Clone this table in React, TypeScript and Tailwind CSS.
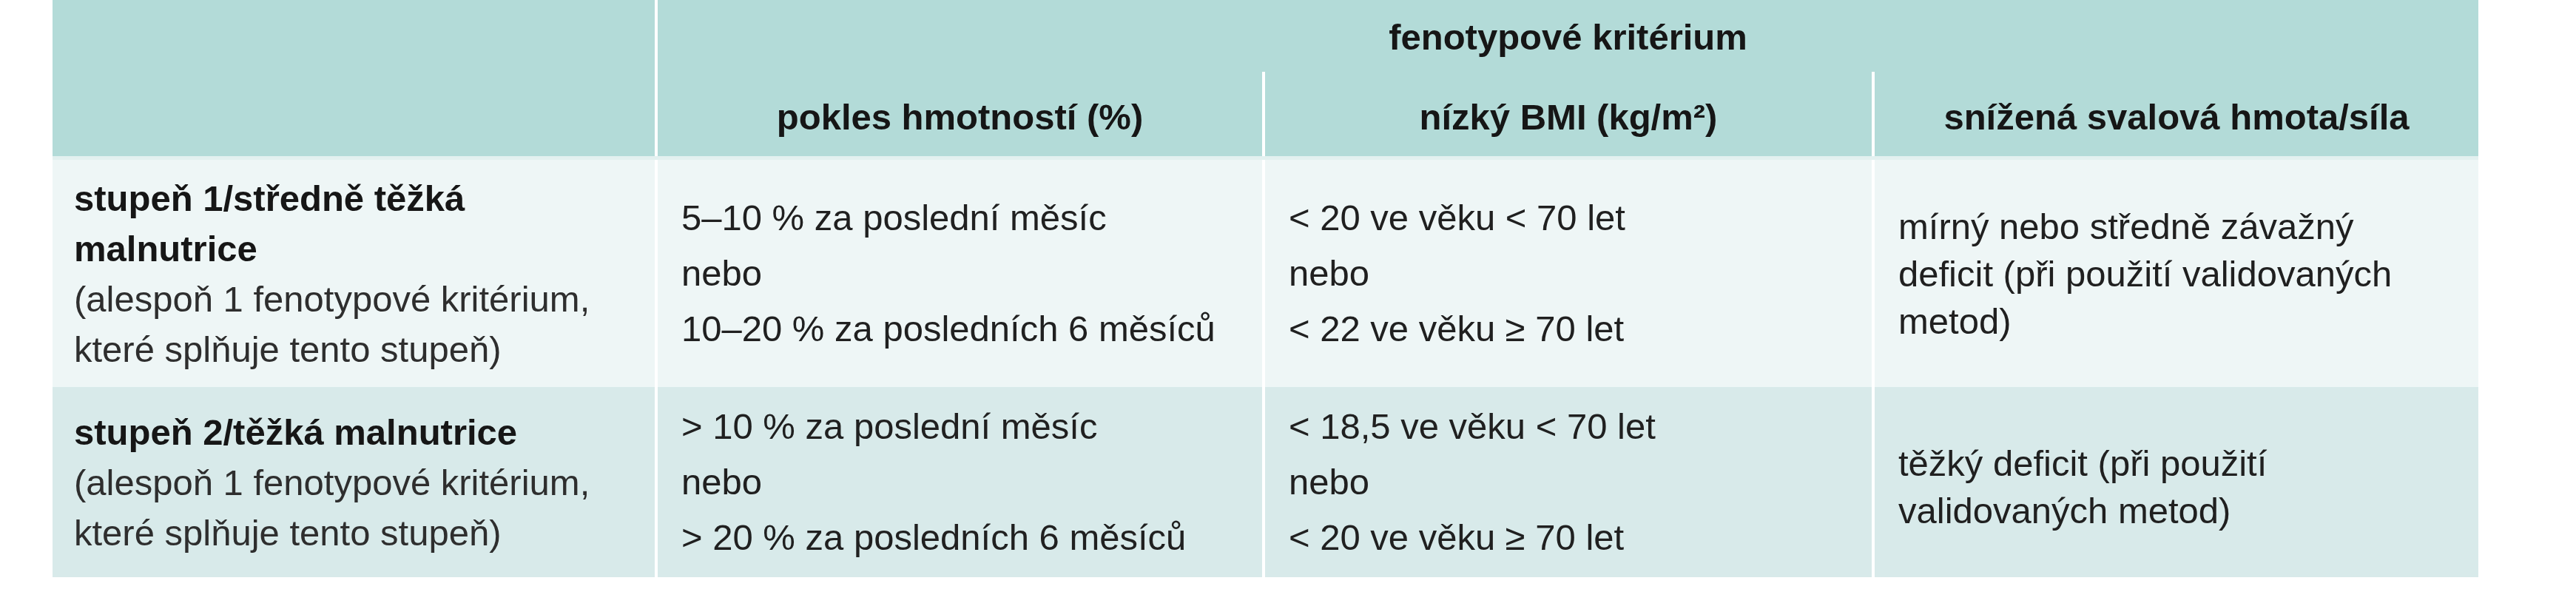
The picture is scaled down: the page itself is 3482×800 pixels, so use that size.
const cols = "grid grid-cols-[814px_821px_824px_820px]"

const rows = [
  {
    bg: "bg-[#eef6f6]",
    height: "h-[307px]",
    title: ["stupeň 1/středně těžká", "malnutrice"],
    weight: ["5–10 % za poslední měsíc", "nebo", "10–20 % za posledních 6 měsíců"],
    bmi: ["< 20 ve věku < 70 let", "nebo", "< 22 ve věku ≥ 70 let"],
    muscle: ["mírný nebo středně závažný", "deficit (při použití validovaných", "metod)"],
    musclePad: "pt-0",
  },
  {
    bg: "bg-[#d8eaea]",
    height: "h-[257px]",
    title: ["stupeň 2/těžká malnutrice"],
    weight: ["> 10 % za poslední měsíc", "nebo", "> 20 % za posledních 6 měsíců"],
    bmi: ["< 18,5 ve věku < 70 let", "nebo", "< 20 ve věku ≥ 70 let"],
    muscle: ["těžký deficit (při použití", "validovaných metod)"],
    musclePad: "pt-3",
  },
]

export default function App() {
  return (
    <div className="min-h-[800px] w-full bg-white font-['Liberation_Sans',Arial,sans-serif] text-[49px] text-[#202020]">
      <div className="ml-[71px] w-[3279px]">
        <div className={`${cols} grid-rows-[97px_114px] bg-[#b3dbd8] font-bold text-[#161616]`}>
          <div className="row-span-2" />
          <div className="col-span-3 flex items-center justify-center border-l-4 border-white pt-[3px] leading-none">
            fenotypové kritérium
          </div>
          <HeaderCell>pokles hmotností (%)</HeaderCell>
          <HeaderCell>nízký BMI (kg/m²)</HeaderCell>
          <HeaderCell>snížená svalová hmota/síla</HeaderCell>
        </div>

        <div className="h-[5px] bg-[#e3f1f0]" />

        {rows.map((row) => (
          <div key={row.title[0]} className={`${cols} ${row.bg} ${row.height}`}>
            <div className="flex flex-col justify-center pl-[29px] leading-[68px]">
              {row.title.map((line) => (
                <span key={line} className="font-bold text-[#161616]">
                  {line}
                </span>
              ))}
              <span className="text-[#2e2e2e]">(alespoň 1 fenotypové kritérium,</span>
              <span className="text-[#2e2e2e]">které splňuje tento stupeň)</span>
            </div>
            <BodyCell lines={row.weight} leading="leading-[75px]" />
            <BodyCell lines={row.bmi} leading="leading-[75px]" />
            <BodyCell lines={row.muscle} leading={`leading-[64px] ${row.musclePad}`} />
          </div>
        ))}
      </div>
    </div>
  )
}

function HeaderCell({ children }: { children: React.ReactNode }) {
  return (
    <div className="flex items-center justify-center border-l-4 border-white pt-2 leading-none">
      {children}
    </div>
  )
}

function BodyCell({ lines, leading }: { lines: string[]; leading: string }) {
  return (
    <div className={`flex flex-col justify-center border-l-4 border-white pl-[32px] ${leading}`}>
      {lines.map((line) => (
        <span key={line}>{line}</span>
      ))}
    </div>
  )
}
